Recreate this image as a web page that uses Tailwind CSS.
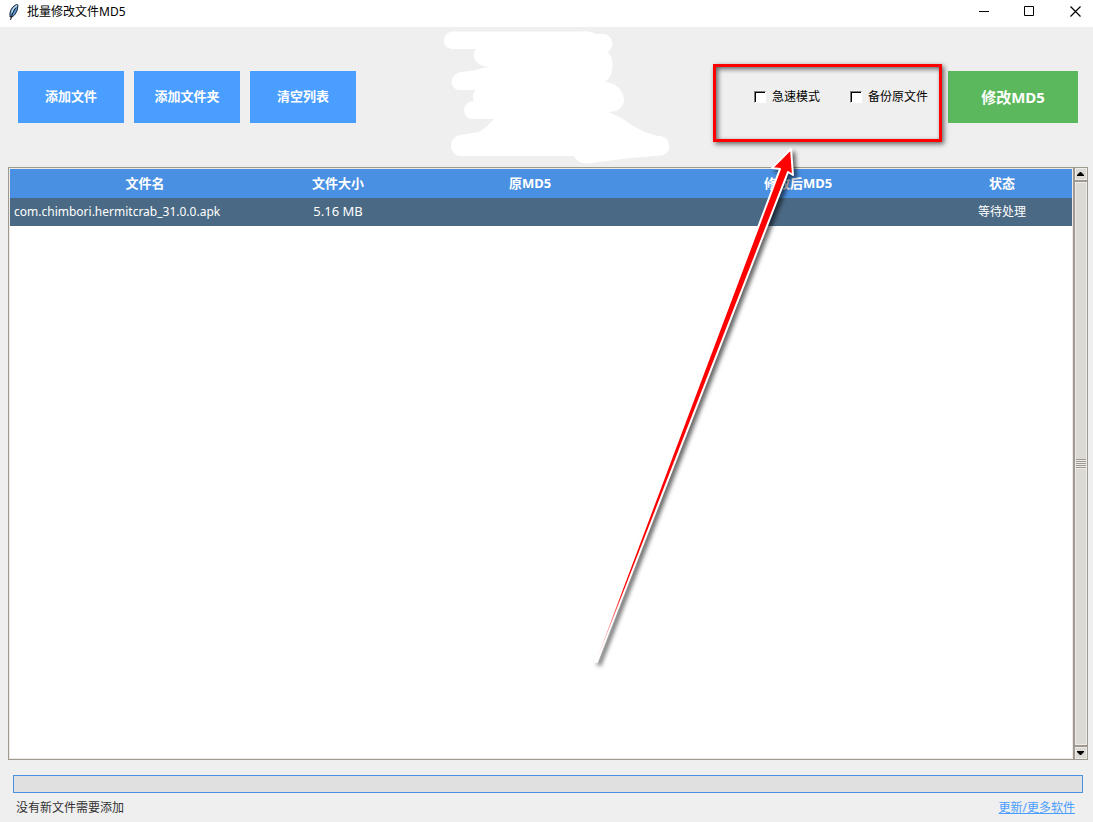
<!DOCTYPE html>
<html lang="zh-CN">
<head>
  <meta charset="UTF-8" />
  <title>批量修改文件MD5</title>
  <script src="https://cdn.jsdelivr.net/npm/@tailwindcss/browser@4"></script>
</head>
<body class="relative flex h-screen flex-col overflow-hidden bg-[#efefef] font-['Noto_Sans','Noto_Sans_CJK_SC',sans-serif] text-xs text-black">
  <!-- Title bar -->
  <header class="flex h-[27px] shrink-0 items-center justify-between bg-white pl-2">
    <div class="flex items-center gap-2 pb-1">
      <svg class="h-[18px] w-[11px]" viewBox="0 0 11 18">
        <path d="M2 14 L2 10 Q3 4 8.500 1.500 L10 2 Q10 8 6.500 12 L4 14 Z" fill="#5c9bd8" stroke="#1c2733" stroke-width="1" />
        <path d="M2.500 17 Q4 10 8 4" fill="none" stroke="#111" stroke-width="1" />
        <path d="M3.500 9.500 Q5 5 9 2.500" fill="none" stroke="#d4e8fa" stroke-width="1.200" />
      </svg>
      <h1>批量修改文件MD5</h1>
    </div>
    <div class="flex h-full">
      <button aria-label="最小化" class="grid w-[46px] place-items-center pb-1">
        <svg class="size-[11px]" viewBox="0 0 11 11" stroke="#000" fill="none"><path d="M0 5.5H10" /></svg>
      </button>
      <button aria-label="最大化" class="grid w-[45px] place-items-center pb-1">
        <svg class="size-[11px]" viewBox="0 0 11 11" stroke="#000" fill="none"><path d="M.5 .5H9.500V9.500H.5Z" /></svg>
      </button>
      <button aria-label="关闭" class="grid w-[41px] place-items-center pb-1 pl-[5px]">
        <svg class="size-[11px]" viewBox="0 0 11 11" stroke="#000" stroke-width="1.200" fill="none"><path d="M.5 .5L10.500 10.500M10.500 .5L.5 10.500" /></svg>
      </button>
    </div>
  </header>

  <!-- Toolbar -->
  <div class="flex h-[140px] shrink-0 items-center justify-between pr-[15px] pl-[18px]">
    <div class="flex gap-[10px]">
      <button class="h-[52px] w-[106px] bg-[#4a9eff] text-[13px] font-bold text-white">添加文件</button>
      <button class="h-[52px] w-[106px] bg-[#4a9eff] text-[13px] font-bold text-white">添加文件夹</button>
      <button class="h-[52px] w-[106px] bg-[#4a9eff] text-[13px] font-bold text-white">清空列表</button>
    </div>
    <div class="flex items-center">
      <label class="flex items-center gap-[6px]">
        <input type="checkbox" class="size-3 appearance-none border border-t-[#808080] border-r-white border-b-white border-l-[#808080] bg-white shadow-[inset_1px_1px_#000]" />
        急速模式
      </label>
      <label class="ml-[30px] flex items-center gap-[6px]">
        <input type="checkbox" class="size-3 appearance-none border border-t-[#808080] border-r-white border-b-white border-l-[#808080] bg-white shadow-[inset_1px_1px_#000]" />
        备份原文件
      </label>
      <button class="ml-5 h-[52px] w-[130px] bg-[#5cb85c] text-[15px] font-bold text-white">修改MD5</button>
    </div>
  </div>

  <!-- File list -->
  <main class="mr-[5px] ml-2 flex min-h-0 flex-1">
    <div class="min-w-0 flex-1 border border-r-0 border-[#9e9a91] bg-white">
      <div class="h-full border border-t-[#eeebe7] border-r-[#eeebe7] border-b-[#eeebe7] border-l-[#eeebe7]">
        <table class="w-full table-fixed border-collapse text-center text-white">
          <colgroup>
            <col class="w-[270px]" />
            <col class="w-[116px]" />
            <col />
            <col />
            <col class="w-[140px]" />
          </colgroup>
          <thead>
            <tr class="h-[29px] bg-[#4a90e2] text-[13px]">
              <th>文件名</th>
              <th>文件大小</th>
              <th>原MD5</th>
              <th>修改后MD5</th>
              <th>状态</th>
            </tr>
          </thead>
          <tbody>
            <tr class="h-7 bg-[#4a6984]">
              <td class="pl-1 text-left">com.chimbori.hermitcrab_31.0.0.apk</td>
              <td class="text-[13px]">5.16 MB</td>
              <td></td>
              <td></td>
              <td>等待处理</td>
            </tr>
          </tbody>
        </table>
      </div>
    </div>
    <!-- Scrollbar -->
    <div class="flex w-[15px] flex-col border border-l-2 border-[#9e9a91] bg-[#dcdad5]">
      <button aria-label="向上" class="grid h-3 place-items-center border border-[#eeebe7]">
        <svg class="h-1 w-2" viewBox="0 0 8 4"><path d="M3 0h1L7 3v1H0V3Z" /></svg>
      </button>
      <div class="grid flex-1 place-items-center border-y-2 border-[#9e9a91]">
        <div class="h-full w-full border border-[#eeebe7] grid place-items-center">
          <svg class="h-[10px] w-[10px]" viewBox="0 0 10 10"><path d="M0 1.500H10M0 3.500H10M0 5.500H10M0 7.500H10M0 9.500H10" stroke="#eeebe7" /><path d="M0 .5H10M0 2.500H10M0 4.500H10M0 6.500H10M0 8.500H10" stroke="#9e9a91" /></svg>
        </div>
      </div>
      <button aria-label="向下" class="grid h-3 place-items-center border border-[#eeebe7]">
        <svg class="h-1 w-2" viewBox="0 0 8 4"><path d="M0 0H7V1L4 4H3L0 1Z" /></svg>
      </button>
    </div>
  </main>

  <!-- Progress and status -->
  <footer class="mt-[15px] mr-[10px] ml-[13px] shrink-0">
    <div role="progressbar" aria-label="进度" aria-valuenow="0" class="h-[18px] border border-[#4a90e2] bg-[#e0e0e0]"></div>
    <div class="flex h-[29px] items-center justify-between pr-2 pl-[3px] text-[#333]">
      <span>没有新文件需要添加</span>
      <a href="#" class="text-[#4a9eff] underline">更新/更多软件</a>
    </div>
  </footer>

  <!-- White brush strokes -->
  <svg class="pointer-events-none absolute top-[27px] left-[440px] h-[140px] w-[234px]" viewBox="440 27 234 140">
    <path d="M453 31.500H583Q590 30.500 596 34H604C612 35 616 46 608 52Q614 59 612 70Q612 76 605 82C615 82 624 91 624 99C624 108 617 112 608 112Q618 115 630 124Q640 131 657 136H661C673 139 671 155 661 155.500L630 158L588 163.500Q578 164 574 156H461C449 156 447 138 460 135L479 132Q485 129 494 119H473C462 119 460 102 474 101Q471 94 476 90H461C449 90 448 75 461 72L474 70.500Q484 67 492 67C477 67 470 58 476 49H453C441 49 441 32 453 31.500Z" fill="#fff" />
  </svg>

  <!-- Red callout -->
  <div class="pointer-events-none absolute top-[64px] right-[151px] h-[78px] w-[229px] border-3 border-[#f00] shadow-[2px_2px_5px_#0009,inset_2px_2px_5px_#0009]"></div>
  <svg class="pointer-events-none absolute top-[140px] left-[580px] h-[535px] w-[230px] drop-shadow-[3px_3px_2px_#0009]" viewBox="580 140 230 535">
    <defs>
      <linearGradient id="shaft" gradientUnits="userSpaceOnUse" x1="596" y1="662" x2="622" y2="590">
        <stop offset="0" stop-color="#fff" />
        <stop offset="1" stop-color="#f00" />
      </linearGradient>
    </defs>
    <path d="M791 149L772 168L780 169L595 661L597 662L788 172L793 175Z" fill="url(#shaft)" stroke="#fff" stroke-width="2" stroke-linejoin="round" />
  </svg>
</body>
</html>
